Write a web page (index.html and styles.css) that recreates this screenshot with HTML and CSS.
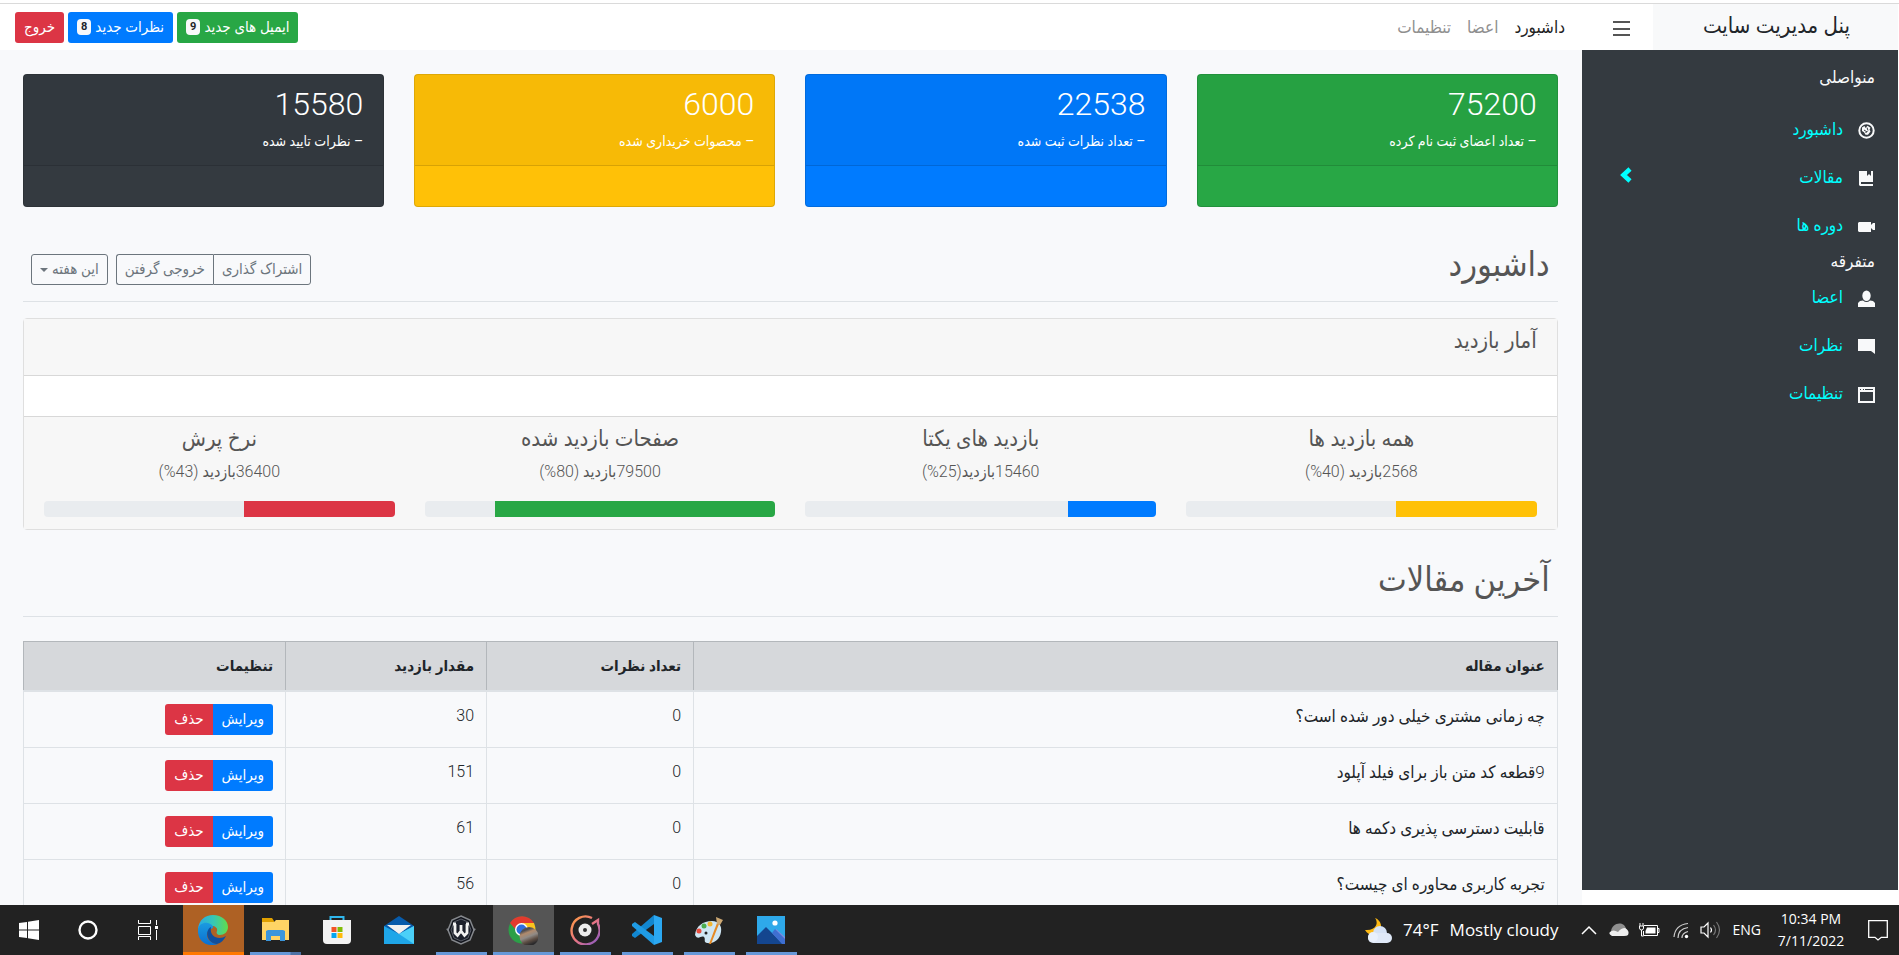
FILE: index.html
```html
<!DOCTYPE html>
<html lang="fa" dir="rtl">
<head>
<meta charset="utf-8">
<title>پنل مدیریت سایت</title>
<link rel="stylesheet" href="styles.css">
</head>
<body>
<div class="page">
  <header class="topbar">
    <a class="brand" href="#">پنل مدیریت سایت</a>
    <button class="menu-toggle" type="button" aria-label="منو">
      <svg width="18" height="16" viewBox="0 0 18 16"><path d="M0 1h17M0 8h17M0 14h17" stroke="#555" stroke-width="2"/></svg>
    </button>
    <nav class="topnav">
      <a class="topnav-link active" href="#">داشبورد</a>
      <a class="topnav-link" href="#">اعضا</a>
      <a class="topnav-link" href="#">تنظیمات</a>
    </nav>
    <div class="actions">
      <button class="btn green" type="button">ایمیل های جدید <span class="badge">9</span></button>
      <button class="btn blue" type="button">نظرات جدید <span class="badge">8</span></button>
      <button class="btn red" type="button">خروج</button>
    </div>
  </header>

  <div class="body">
    <aside class="sidebar">
      <h2 class="side-title first">منواصلی</h2>
      <a class="side-link" href="#">
        <svg class="side-icon" viewBox="0 0 17 17"><circle cx="8.500" cy="8.500" r="7.200" fill="none" stroke="#f8f9fa" stroke-width="2"/><path d="M4 5.500l2.500-1.500 1 2 2-2.200 3 2-1 1.700 1 2-2.500 3.200-2.500 0-1.500-2.500-2-1.200z" fill="#f8f9fa"/><path d="M6 8l3 2M9 5.500l1 3M7.500 11l2-2" stroke="#343a40"/></svg>
        <span>داشبورد</span>
      </a>
      <a class="side-link" href="#">
        <svg class="side-icon" viewBox="0 0 17 17"><path d="M1 1h8v5l2-2 2 2V1h2v11H3v2h12v2H2l-1-1z" fill="#f8f9fa"/></svg>
        <span>مقالات</span>
        <svg class="chevron" viewBox="0 0 12 16"><path d="M10 2L3.500 8l6.500 6" fill="none" stroke="#0ff" stroke-width="4.600"/></svg>
      </a>
      <a class="side-link" href="#">
        <svg class="side-icon" viewBox="0 0 17 17"><path d="M0 5l1-1h12v3l2-2h2v7h-2l-2-2v4H1l-1-1z" fill="#f8f9fa"/></svg>
        <span>دوره ها</span>
      </a>
      <h2 class="side-title">متفرقه</h2>
      <a class="side-link" href="#">
        <svg class="side-icon" viewBox="0 0 17 17"><ellipse cx="8.500" cy="5.800" rx="4.200" ry="5.200" fill="#f8f9fa"/><path d="M0 17v-4l2-2 3-.5q3.500 3 7 0l3 .5 2 2v4z" fill="#f8f9fa"/></svg>
        <span>اعضا</span>
      </a>
      <a class="side-link" href="#">
        <svg class="side-icon" viewBox="0 0 17 17"><path d="M0 1h17v15l-4-3H0z" fill="#f8f9fa"/></svg>
        <span>نظرات</span>
      </a>
      <a class="side-link" href="#">
        <svg class="side-icon" viewBox="0 0 17 17"><path fill-rule="evenodd" d="M0 1h17v16H0zM2 3v1h1V3zM5 3v1h1V3zM7 3v1h8V3zM2 6v9h13V6z" fill="#f8f9fa"/></svg>
        <span>تنظیمات</span>
      </a>
    </aside>

    <main class="content">
      <section class="summary">
        <article class="tile green"><div class="tile-body"><strong>75200</strong><p>– تعداد اعضای ثبت نام کرده</p></div><div class="tile-foot"></div></article>
        <article class="tile blue"><div class="tile-body"><strong>22538</strong><p>– تعداد نظرات ثبت شده</p></div><div class="tile-foot"></div></article>
        <article class="tile yellow"><div class="tile-body"><strong>6000</strong><p>– محصوات خریداری شده</p></div><div class="tile-foot"></div></article>
        <article class="tile dark"><div class="tile-body"><strong>15580</strong><p>– نظرات تایید شده</p></div><div class="tile-foot"></div></article>
      </section>

      <div class="heading">
        <h1>داشبورد</h1>
        <div class="tools">
          <div class="btn-group">
            <button class="btn outline" type="button">اشتراک گذاری</button>
            <button class="btn outline" type="button">خروجی گرفتن</button>
          </div>
          <button class="btn outline" type="button" aria-haspopup="true">این هفته <span class="caret"></span></button>
        </div>
      </div>

      <section class="card">
        <h3 class="card-head">آمار بازدید</h3>
        <div class="card-body"></div>
        <div class="card-foot">
          <div class="stat"><h4>همه بازدید ها</h4><p>2568بازدید (40%)</p><div class="bar"><div class="fill yellow" style="width:40%"></div></div></div>
          <div class="stat"><h4>بازدید های یکتا</h4><p>15460بازدید(25%)</p><div class="bar"><div class="fill blue" style="width:25%"></div></div></div>
          <div class="stat"><h4>صفحات بازدید شده</h4><p>79500بازدید (80%)</p><div class="bar"><div class="fill green" style="width:80%"></div></div></div>
          <div class="stat"><h4>نرخ پرش</h4><p>36400بازدید (43%)</p><div class="bar"><div class="fill red" style="width:43%"></div></div></div>
        </div>
      </section>

      <div class="heading second"><h1>آخرین مقالات</h1></div>

      <table class="articles">
        <colgroup><col class="c-title"><col class="c-comments"><col class="c-views"><col class="c-actions"></colgroup>
        <thead><tr><th>عنوان مقاله</th><th>تعداد نظرات</th><th>مقدار بازدید</th><th>تنظیمات</th></tr></thead>
        <tbody>
          <tr><td class="name">چه زمانی مشتری خیلی دور شده است؟</td><td>0</td><td>30</td><td><div class="btn-group"><button class="btn blue" type="button">ویرایش</button><button class="btn red" type="button">حذف</button></div></td></tr>
          <tr><td class="name">9قطعه کد متن باز برای فیلد آپلود</td><td>0</td><td>151</td><td><div class="btn-group"><button class="btn blue" type="button">ویرایش</button><button class="btn red" type="button">حذف</button></div></td></tr>
          <tr><td class="name">قابلیت دسترسی پذیری دکمه ها</td><td>0</td><td>61</td><td><div class="btn-group"><button class="btn blue" type="button">ویرایش</button><button class="btn red" type="button">حذف</button></div></td></tr>
          <tr><td class="name">تجربه کاربری محاوره ای چیست؟</td><td>0</td><td>56</td><td><div class="btn-group"><button class="btn blue" type="button">ویرایش</button><button class="btn red" type="button">حذف</button></div></td></tr>
        </tbody>
      </table>
    </main>
  </div>
</div>

<footer class="taskbar" dir="ltr">
  <div class="system">
    <button type="button" aria-label="Start"><svg width="20" height="20" viewBox="0 0 20 20"><path d="M0 3l8-1v7.500H0zM9 1.800L20 0v9.500H9zM0 10.500h8V18l-8-1zM9 10.500h11V20L9 18.300z" fill="#fff"/></svg></button>
    <button type="button" aria-label="Search"><svg width="20" height="20" viewBox="0 0 20 20"><circle cx="10" cy="10" r="8.500" fill="none" stroke="#fff" stroke-width="2.400"/></svg></button>
    <button type="button" aria-label="Task view"><svg width="20" height="20" viewBox="0 0 20 20"><path d="M.5 0v3.500h12V0M.5 6.500h12v8H.5zM.5 20v-3.500h12V20M18.500 0v5M18.500 10v10" fill="none" stroke="#fff"/><path d="M17 6h3v3h-3z" fill="#fff"/></svg></button>
  </div>
  <div class="apps">
    <button class="app alert" type="button" aria-label="Edge"><svg viewBox="0 0 30 30"><defs><linearGradient id="eg" x1="0" x2="1"><stop offset="0" stop-color="#2aa9e6"/><stop offset=".5" stop-color="#35c6b8"/><stop offset="1" stop-color="#62dd4a"/></linearGradient><linearGradient id="eb" x1="0" y1="0" x2="0" y2="1"><stop offset="0" stop-color="#1b9be0"/><stop offset="1" stop-color="#0c6fd0"/></linearGradient></defs><path d="M0 14C1 5 7 0 15 0c9 0 15 6 15 12 0 5-4 8-8 8-3 0-4-2-3-4 1-3-2-5-5-5C7 10 2 13 0 14z" fill="url(#eg)"/><path d="M0 14c1-5 6-7 10-6 3 1 6 3 5 5-7 2-8 9-3 13 2 2 5 3 8 3C9 33-1 26 0 14z" fill="url(#eb)"/><path d="M13 12c-7 4-4 16 6 17 4-1 7-4 9-8-6 4-17 2-15-9z" fill="#0f4f9e"/></svg></button>
    <button class="app open multi" type="button" aria-label="Explorer"><svg viewBox="0 0 30 30"><path d="M2 3h10l2 3v4H2z" fill="#e0a000"/><path d="M2 7h12l2-2h13v20H2z" fill="#ffd465"/><path d="M6 26V16l2-1h15l2 1v10h-5v-5h-9v5z" fill="#3b96dc"/></svg></button>
    <button class="app" type="button" aria-label="Store"><svg viewBox="0 0 30 30"><path d="M8.500 6V2h13v4" fill="none" stroke="#2fb7ee" stroke-width="2"/><path d="M1 5h28v20q0 4-4 4H5q-4 0-4-4z" fill="#f3f3f3"/><path d="M9.500 12h5v5h-5z" fill="#f35325"/><path d="M15.500 12h5v5h-5z" fill="#81bc06"/><path d="M9.500 18h5v5h-5z" fill="#05a6f0"/><path d="M15.500 18h5v5h-5z" fill="#ffba08"/></svg></button>
    <button class="app" type="button" aria-label="Mail"><svg viewBox="0 0 30 30"><path d="M0 11L15 1l15 10-6 8H6z" fill="#075bab"/><path d="M0 11l15 8 15-8v18H0z" fill="#1fa6e8"/><path d="M30 11v18L15 19z" fill="#4bd0f8"/><path d="M3 10h24l-12 9z" fill="#f1f1f1"/></svg></button>
    <button class="app open" type="button" aria-label="W"><svg viewBox="0 0 30 30"><path d="M15 1l9 4 4 10-4 10-9 4-9-4-4-10L6 5z" fill="#12151d" stroke="#85888d" stroke-width="1.500"/><path d="M15 4l7 3 3 8-3 8-7 3-7-3-3-8 3-8z" fill="#1c202c" stroke="#5a5e68"/><path d="M0 14l3-1v4zM30 14l-3-1v4z" fill="#85888d"/><path d="M7 9h3M20 9h3M9 9v9l2.500 2.500L15 16l3.500 4.500L21 18V9M15 10v6" fill="none" stroke="#f1f1f1" stroke-width="2.800"/></svg></button>
    <button class="app open current" type="button" aria-label="Chrome"><svg viewBox="0 0 30 30"><defs><linearGradient id="ju" x1="0" y1="0" x2="0.400" y2="1"><stop offset="0" stop-color="#6f6259"/><stop offset=".25" stop-color="#4c4d52"/><stop offset=".4" stop-color="#b08a6c"/><stop offset=".6" stop-color="#8f8a86"/><stop offset=".8" stop-color="#5e4f45"/><stop offset="1" stop-color="#2b2a2c"/></linearGradient></defs><circle cx="14" cy="15" r="13.500" fill="#2c9f48"/><path d="M2 8A14 14 0 0 1 26 8H14l-6 7z" fill="#e23a2e"/><path d="M14 8h12q3.500 8-1 15l-9 4 4-12z" fill="#fcc31e"/><circle cx="13.500" cy="14.500" r="6.500" fill="#fff"/><circle cx="13.500" cy="14.500" r="5" fill="#2f6fe0"/><circle cx="21" cy="21.500" r="9.500" fill="url(#ju)"/></svg></button>
    <button class="app open" type="button" aria-label="Music"><svg viewBox="0 0 30 30"><defs><linearGradient id="mu" x1="0" y1="0" x2="1" y2="1"><stop offset="0" stop-color="#ff9c42"/><stop offset=".5" stop-color="#e87583"/><stop offset="1" stop-color="#8358c8"/></linearGradient></defs><path d="M22 3A14 14 0 1 0 28 9V5l-6 4" fill="none" stroke="url(#mu)" stroke-width="2.400"/><circle cx="15" cy="15" r="6.500" fill="#ececec"/><circle cx="15" cy="15" r="2" fill="#333"/></svg></button>
    <button class="app open" type="button" aria-label="VS Code"><svg viewBox="0 0 30 30"><path d="M22 9L3 23l-3-2v-2L22 0z" fill="#1287d0"/><path d="M22 21L3 7 0 9v2l22 19z" fill="#1f9be4"/><path d="M22 0l8 3v24l-8 3z" fill="#2ba8f2"/></svg></button>
    <button class="app open" type="button" aria-label="Paint"><svg viewBox="0 0 30 30"><path d="M1 20C2 11 9 6 18 6c7 0 10 5 9 11-1 8-8 12-14 11-4-1-1-4-3-6-3-2-6 4-9-2z" fill="#cfe6f3"/><circle cx="5" cy="16" r="2.500" fill="#e84c3d"/><circle cx="10" cy="11" r="2.500" fill="#4bae4f"/><circle cx="16" cy="9" r="2.500" fill="#f2b632"/><circle cx="12" cy="18" r="1.500" fill="#222"/><path d="M15 29l8-21 2 1-8 20z" fill="#e58a25"/><path d="M22 2l7 3-3 5-3-1z" fill="#cda873"/></svg></button>
    <button class="app open" type="button" aria-label="Photos"><svg viewBox="0 0 30 30"><path d="M1 1h28v28H1z" fill="#2ea9ea"/><path d="M14 23l6-9 9 8v7H14z" fill="#7f8ce0"/><path d="M1 21l9-9 17 17H1z" fill="#14468f"/><path d="M16 18l3-4 10 10v5h-3z" fill="#3e6fd1"/><circle cx="19" cy="8" r="2.600" fill="#fff"/></svg></button>
  </div>
  <div class="tray">
    <svg class="weather" width="27" height="28" viewBox="0 0 27 28"><path d="M10 2c4 5 1 13-10 12 5 9 17 5 16-4 0-4-3-7-6-8z" fill="#fdb913"/><circle cx="15" cy="17" r="7" fill="#d5e2f5"/><rect x="3" y="17" width="24" height="10" rx="5" fill="#dfe9f8"/><circle cx="8" cy="21" r="5" fill="#e9f0fb"/></svg>
    <span class="forecast"><span>74°F</span><span>Mostly cloudy</span></span>
    <svg class="up" width="16" height="10" viewBox="0 0 16 10"><path d="M1 9l7-7 7 7" fill="none" stroke="#fff" stroke-width="1.500"/></svg>
    <svg class="cloud" width="20" height="14" viewBox="0 0 20 14"><path d="M2 9C2 0 15-3 17 6l-8 4z" fill="#8f8f8f"/><path d="M3 13q-4-2-2-4 3-3 8 0 3-4 7-4 5 3 3 7-1 1-4 1z" fill="#eee"/></svg>
    <svg class="battery" width="21" height="16" viewBox="0 0 21 16"><path d="M5 3.500h13.500v10h-14V9M18.500 6.500h1.500v4h-1.500M1 1v3M4 1v3M.5 4h4v2q0 2-2 2t-2-2zM2.500 8v6h2" fill="none" stroke="#fff"/><path d="M8 5.500h8.500v6h-10V9z" fill="#fff"/></svg>
    <svg class="wifi" width="16" height="17" viewBox="0 0 16 17"><path d="M1 15Q2 3 15 1.500M5 16Q5 7 15 5.500M9 16Q9 11 15 9.500" fill="none" stroke="#ccc" stroke-width="1.200"/><circle cx="13.500" cy="14.500" r="1.700" fill="#fff"/></svg>
    <svg class="volume" width="21" height="18" viewBox="0 0 21 18"><path d="M1 6h3l4-4v14l-4-4H1zM10.500 6.500q2 2.500 0 5" fill="none" stroke="#fff" stroke-width="1.200"/><path d="M13.500 4q4 5 0 10M16.500 1q6 8 0 16" fill="none" stroke="#777" stroke-width="1.200"/></svg>
    <span class="lang">ENG</span>
    <span class="clock"><span>10:34 PM</span><span>7/11/2022</span></span>
    <svg class="notice" width="20" height="21" viewBox="0 0 20 21"><path d="M.7.700h18.600v16.600h-6L10 20l-3-2.700H.7z" fill="none" stroke="#fff" stroke-width="1.300"/></svg>
  </div>
</footer>
</body>
</html>
```
FILE: styles.css
```css
* { box-sizing: border-box; }
body {
  margin: 0;
  height: 100vh;
  display: flex;
  flex-direction: column;
  overflow: hidden;
  background: #fff;
  color: #212529;
  font: 300 16px/24px Roboto, "DejaVu Sans Condensed", "DejaVu Sans", sans-serif;
}
h1, h2, h3, h4, p { margin: 0; font-weight: 300; }
a { color: inherit; text-decoration: none; }
button { font-family: inherit; cursor: pointer; }

.page {
  flex: 1;
  min-height: 0;
  display: flex;
  flex-direction: column;
  overflow: hidden;
  margin-top: 3px;
  padding-inline-start: 1px;
  border-top: 1px solid #dadada;
}
.topbar { display: flex; align-items: center; flex: none; height: 46px; background: #fff; }
.brand {
  align-self: stretch;
  width: 245px;
  padding-inline-start: 48px;
  background: #f8f9fa;
  font-size: 22px;
  line-height: 44px;
}
.menu-toggle { display: flex; margin-inline-start: 22px; margin-top: 4px; padding: 0; border: 0; background: none; }
.topnav { display: flex; gap: 16px; margin-inline-start: 48px; font-size: 17px; }
.topnav-link { color: #8f8f8f; }
.topnav-link.active { color: #222; }
.actions { display: flex; gap: 4px; margin-inline-start: auto; padding-inline-end: 15px; }

.btn {
  display: inline-flex;
  align-items: center;
  gap: 4px;
  height: 31px;
  padding: 0 8px;
  border: 1px solid transparent;
  border-radius: 3px;
  color: #fff;
  font-size: 15px;
  line-height: 21px;
  font-weight: 400;
  white-space: nowrap;
}
.badge { padding: 0 4px; border-radius: 4px; background: #f8f9fa; color: #212529; font-size: 11px; line-height: 16px; font-weight: 700; }
.green { background: #28a745; }
.blue { background: #007bff; }
.yellow { background: #ffc107; }
.red { background: #dc3545; }
.dark { background: #343a40; }
.outline { border-color: #6c757d; background: transparent; color: #6c757d; font-weight: 300; }
.caret { border: 4px solid transparent; border-top-color: #6c757d; border-bottom: 0; }
.btn-group { display: flex; }
.btn-group .btn:first-child { border-radius: 0 3px 3px 0; }
.btn-group .btn:last-child { border-radius: 3px 0 0 3px; }
.btn-group .outline:last-child { border-right: 0; }

.body { flex: 1; min-height: 0; display: flex; }
.sidebar {
  flex: 0 0 16.666%;
  margin-bottom: 15px;
  padding: 15px 23px;
  background: #343a40;
}
.side-title { color: #f8f9fa; font-size: 17px; line-height: 24px; font-weight: 400; }
.side-title.first { margin-bottom: 16px; }
.side-link { display: flex; align-items: center; height: 48px; color: #0ff; font-size: 17px; }
.side-icon { width: 17px; height: 17px; margin-top: 2px; margin-inline-end: 15px; }
.chevron { width: 12px; height: 16px; margin-bottom: 4px; margin-inline-start: auto; margin-inline-end: 15px; }

.content { flex: 1; min-width: 0; padding: 24px 24px 0 23px; background: #f8f9fb; overflow: hidden; }
.summary { display: grid; grid-template-columns: repeat(4, 1fr); gap: 30px; }
.tile { border: 1px solid rgba(0, 0, 0, .13); border-radius: 4px; color: #fff; }
.tile-body { height: 91px; padding: 10px 20px; border-bottom: 1px solid rgba(0, 0, 0, .13); background: rgba(0, 0, 0, .03); }
.tile strong { display: block; font-size: 32px; line-height: 38px; font-weight: 300; }
.tile p { margin-top: 8px; font-size: 14px; line-height: 20px; font-weight: 400; }
.tile-foot { height: 40px; }

.heading {
  display: flex;
  justify-content: space-between;
  align-items: center;
  height: 64px;
  margin-top: 31px;
  padding: 0 8px;
  border-bottom: 1px solid #dee2e6;
  color: #555;
}
.heading.second { margin-top: 23px; }
.heading h1 { margin-bottom: 12px; font-size: 34px; line-height: 40px; }
.tools { display: flex; gap: 8px; }

.card { margin-top: 16px; border: 1px solid #dfdfdf; border-radius: 4px; background: #fff; color: #555; }
.card-head { height: 57px; padding: 10px 20px; border-bottom: 1px solid #d8d8d8; background: #f7f7f7; font-size: 22px; line-height: 24px; }
.card-body { height: 40px; }
.card-foot {
  display: grid;
  grid-template-columns: repeat(4, 1fr);
  gap: 30px;
  padding: 10px 20px 12px;
  border-top: 1px solid #d8d8d8;
  background: #f7f7f7;
  text-align: center;
}
.stat h4 { font-size: 22px; line-height: 24px; }
.stat p { margin-top: 9px; }
.bar { height: 16px; margin-top: 17px; border-radius: 4px; background: #e9ecef; overflow: hidden; }
.fill { height: 16px; }

.articles { width: 100%; margin-top: 24px; border-collapse: collapse; table-layout: fixed; }
.c-comments { width: 207px; }
.c-views { width: 201px; }
.c-actions { width: 262px; }
.articles th, .articles td { padding: 12px; border: 1px solid #dee2e6; text-align: start; vertical-align: top; }
.articles th { border-color: #b3b7bb; border-bottom: 2px solid #dee2e6; background: #d6d8db; font-size: 15px; font-weight: 700; }
.articles .name { font-size: 17px; }

.taskbar {
  flex: none;
  display: flex;
  height: 50px;
  background: #222;
  color: #fff;
  font-family: "Open Sans", "Noto Sans", sans-serif;
  font-weight: 400;
}
.taskbar button { display: flex; align-items: center; justify-content: center; padding: 0; border: 0; background: none; }
.system { display: flex; padding-right: 5px; }
.system button { width: 60px; }
.system button:first-child { width: 58px; }
.apps { display: flex; gap: 1px; }
.taskbar .app { position: relative; width: 61px; }
.app svg { width: 30px; height: 30px; margin-right: 1px; }
.app.open::after { content: ""; position: absolute; bottom: 0; left: 5px; right: 5px; height: 3px; background: #6698d8; }
.taskbar .app.current { background: #555; }
.app.open.current::after { left: 0; right: 0; }
.app.open.multi::after { background: linear-gradient(90deg, #6698d8 40px, #4d71a5 41px); }
.taskbar .app.alert { background: #ae6124; border-bottom: 3px solid #ff7800; padding-top: 3px; }
.tray { display: flex; align-items: center; margin-left: auto; padding-right: 11px; }
.forecast { display: flex; gap: 11px; margin: 0 22px 0 11px; font-size: 17px; white-space: nowrap; }
.cloud { margin: 0 10px 0 12px; }
.wifi { margin: 0 11px 0 13px; }
.lang { margin-left: 12px; font-size: 14px; }
.clock { display: flex; flex-direction: column; width: 100px; font-size: 14px; line-height: 22px; text-align: center; }
.notice { margin-left: 7px; }
```
